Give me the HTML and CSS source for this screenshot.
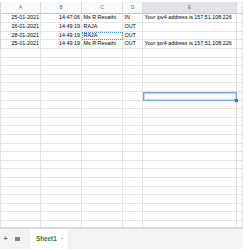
FILE: index.html
```html
<!DOCTYPE html>
<html>
<head>
<meta charset="utf-8">
<meta name="viewport" content="width=device-width,initial-scale=1"/>
<link rel="stylesheet" href="styles.css">
<title>Sheet1</title>
</head>
<body>
<div id="sheet">
  <div class="row head">
    <div class="cell gutter"></div>
    <div class="cell">A</div>
    <div class="cell">B</div>
    <div class="cell">C</div>
    <div class="cell">D</div>
    <div class="cell active">E</div>
    <div class="cell"></div>
  </div>
  <div class="row">
    <div class="cell gutter"></div>
    <div class="cell num">25-01-2021</div>
    <div class="cell num">14:47:06</div>
    <div class="cell">Ms R Revathi</div>
    <div class="cell">IN</div>
    <div class="cell">Your ipv4 address is 157.51.108.226</div>
    <div class="cell"></div>
  </div>
  <div class="row">
    <div class="cell gutter"></div>
    <div class="cell num">26-01-2021</div>
    <div class="cell num">14:49:19</div>
    <div class="cell">RAJA</div>
    <div class="cell">OUT</div>
    <div class="cell"></div>
    <div class="cell"></div>
  </div>
  <div class="row">
    <div class="cell gutter"></div>
    <div class="cell num">28-01-2021</div>
    <div class="cell num">14:49:19</div>
    <div class="cell copied">RAJA</div>
    <div class="cell">OUT</div>
    <div class="cell"></div>
    <div class="cell"></div>
  </div>
  <div class="row">
    <div class="cell gutter"></div>
    <div class="cell num">25-01-2021</div>
    <div class="cell num">14:49:19</div>
    <div class="cell">Ms R Revathi</div>
    <div class="cell">OUT</div>
    <div class="cell">Your ipv4 address is 157.51.108.226</div>
    <div class="cell"></div>
  </div>
  <div id="filler">
    <div class="col gutter"></div>
    <div class="col"></div>
    <div class="col"></div>
    <div class="col"></div>
    <div class="col"></div>
    <div class="col"></div>
    <div class="col"></div>
    <div id="picked"><span id="handle"></span></div>
  </div>
</div>
<div id="scroll"></div>
<div id="tabs">
  <span class="tool plus">+</span>
  <span class="tool list"><i></i><i></i><i></i></span>
  <div class="tab">Sheet1 <span class="caret"></span></div>
</div>
</body>
</html>
```
FILE: styles.css
```css
body{
    margin:0;
    padding:0;
    background:#fff;
    font-family:"Liberation Sans", Arial, sans-serif;
    overflow:hidden;
}
#sheet{
    padding-top:2px;
}
.row,#filler{
    display:grid;
    grid-template-columns:1px 40px 41px 41px 20px 94px 1fr;
}
.cell{
    box-sizing:border-box;
    height:8.6px;
    border-right:1px solid #e2e3e3;
    border-bottom:1px solid #e2e3e3;
    font-size:5.4px;
    line-height:7.6px;
    padding:0 1.5px;
    white-space:nowrap;
    overflow:hidden;
    color:#000;
}
.num{
    text-align:right;
    padding-right:1px;
}
.gutter{
    background:#d4d6d8;
    border:none;
    padding:0;
}
.head .cell{
    height:12.4px;
    background:#f8f9fa;
    border-bottom:1px solid #c4c7c5;
    border-right:1px solid #dcdcdc;
    color:#5f6368;
    font-size:4.5px;
    line-height:11.4px;
    text-align:center;
}
.head .gutter{
    background:#d4d6d8;
    border:none;
}
.head .active{
    background:#e1e3e6;
}
.copied{
    outline:1px dotted #4a8af0;
    outline-offset:-1px;
}
#filler{
    position:relative;
    height:178.2px;
    background:repeating-linear-gradient(to bottom, transparent 0, transparent 7.6px, #e2e3e3 7.6px, #e2e3e3 8.6px);
}
.col{
    border-right:1px solid #e2e3e3;
}
#picked{
    position:absolute;
    left:143px;
    top:43px;
    width:94px;
    height:8.8px;
    box-sizing:border-box;
    border:1px solid #6fa3f3;
    box-shadow:inset 0 0 0 1px #c3d8fb;
}
#handle{
    position:absolute;
    right:-2px;
    bottom:-2px;
    width:3px;
    height:3px;
    background:#1a73e8;
}
#scroll{
    height:2px;
    background:#d8dadc;
}
#tabs{
    display:flex;
    align-items:stretch;
    height:20px;
    background:#f1f3f4;
    padding-left:3px;
}
.tool{
    display:flex;
    align-items:center;
    justify-content:center;
    width:5px;
    color:#6b6e72;
    font-size:7px;
    font-weight:700;
}
.plus{
    margin-right:7px;
}
.list{
    flex-direction:column;
    gap:0.6px;
    width:5px;
}
.list i{
    display:block;
    width:5px;
    height:1.2px;
    background:#80868b;
}
.tab{
    margin-left:10px;
    width:38px;
    background:#fff;
    color:#188038;
    font-size:6.3px;
    font-weight:700;
    display:flex;
    align-items:center;
    padding-left:6px;
    box-sizing:border-box;
    box-shadow:0 0 1px #c0c0c0;
}
.caret{
    margin-left:4px;
    width:0;
    height:0;
    border-left:1.5px solid transparent;
    border-right:1.5px solid transparent;
    border-top:1.5px solid #5f6368;
}
```
